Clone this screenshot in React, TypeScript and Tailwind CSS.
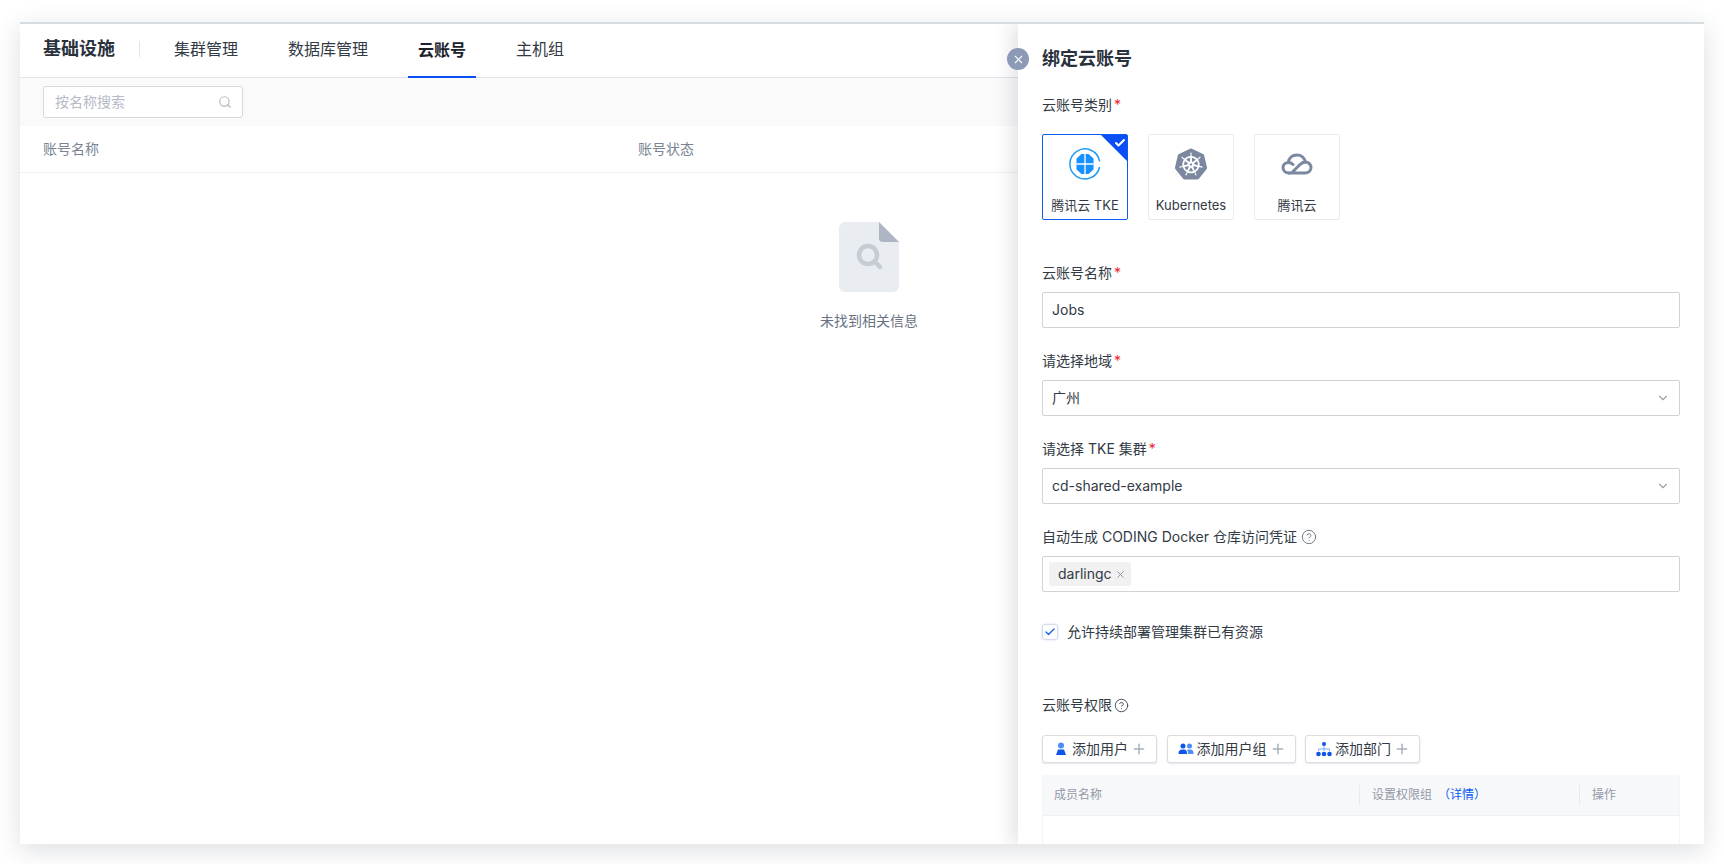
import React from "react";
import { SiKubernetes } from "react-icons/si";
import { ChevronDown, Search, X, Plus, Check, HelpCircle } from "lucide-react";

const font = { fontFamily: 'Inter, "Noto Sans CJK SC", sans-serif' };

function Label({ children, required }: { children: React.ReactNode; required?: boolean }) {
  return (
    <div className="flex items-center h-5 text-sm text-[#323a45]">
      <span>{children}</span>
      {required && <span className="text-[#f5222d] ml-[2px]">*</span>}
    </div>
  );
}

function TkeIcon() {
  return (
    <svg width="32" height="32" viewBox="0 0 32 32">
      <path d="M30.700 13.500 A15 15 0 1 0 30.600 19" fill="none" stroke="#1e9bf5" strokeWidth="1.500" />
      <path d="M12.500 6 H19.500 L24.500 10.500 V21.500 L19.500 26 H12.500 L7.500 21.500 V10.500 Z" fill="#1890ff" />
      <path d="M16 6 V26 M7.500 16 H24.500" stroke="#ffffff" strokeWidth="1.300" />
    </svg>
  );
}

function CloudIcon() {
  return (
    <svg width="32" height="22" viewBox="0 0 32 22" fill="none" stroke="#7b88a0" strokeWidth="3" strokeLinecap="round">
      <path d="M8 20 H24 C27.500 20 30 17.500 30 14.500 C30 11.500 27.500 9 24.500 9 C21 9 19.500 11 18 12.500 L11 19.500" />
      <path d="M8 20 C4.500 20 2 17.500 2 14.500 C2 11.500 4.500 9.500 7.500 9.500 C9 9.500 10.500 10 12 11.500" />
      <path d="M7.300 9.500 C7.800 5 11 2 16 2 C20 2 23.500 5 24.500 9" />
    </svg>
  );
}

function TypeCard({ icon, label, active }: { icon: React.ReactNode; label: string; active?: boolean }) {
  return (
    <div className={`relative w-[86px] h-[86px] rounded-[2px] border flex flex-col items-center ${active ? "border-[#0a5cf5]" : "border-[#e9ebef]"}`}>
      {active && (
        <div className="absolute top-0 right-0 w-[26px] h-[26px] bg-[#0a4ff5] [clip-path:polygon(0_0,100%_0,100%_100%)]">
          <Check className="absolute top-[2px] right-[1px] text-white" size={12} strokeWidth={4} />
        </div>
      )}
      <div className="h-[58px] w-full flex items-center justify-center">{icon}</div>
      <div className="mt-[2px] text-[13px] leading-5 text-[#323a45] whitespace-nowrap">{label}</div>
    </div>
  );
}

function Field({ children }: { children: React.ReactNode }) {
  return (
    <div className="mt-[9px] h-[36px] rounded-[2px] border border-[#cfd3d8] px-[9px] flex items-center justify-between text-sm text-[#323a45]">
      {children}
    </div>
  );
}

function AddButton({ icon, label }: { icon: React.ReactNode; label: string }) {
  return (
    <div className="h-[28px] pl-[10px] pr-[9px] bg-white border border-[#dadde3] rounded-[3px] shadow-[0_1px_2px_rgba(30,40,70,0.12)] flex items-center text-sm text-[#323a45]">
      <span className="w-[16px] h-[16px] flex items-center justify-center mr-[3px]">{icon}</span>
      <span>{label}</span>
      <Plus size={16} className="ml-[3px] text-[#a8b0bf]" strokeWidth={2.2} />
    </div>
  );
}

export default function App() {
  return (
    <div className="w-[1724px] h-[864px] bg-white pt-[22px] pl-[20px] overflow-hidden" style={font}>
      <div className="relative w-[1684px] h-[822px] bg-white border-t-2 border-[#d5dde3] overflow-hidden shadow-[0_6px_24px_rgba(40,50,70,0.16)]">
        <div className="h-[54px] border-b border-[#dfe2e8] flex items-stretch pl-[23px]">
          <div className="flex items-center pb-[3px] text-lg font-semibold text-[#2a313c]">基础设施</div>
          <div className="self-center w-px h-4 bg-[#e3e5e9] ml-[24px] mb-[3px]" />
          <div className="flex gap-[30px] ml-[24px] text-base text-[#323a45]">
            <div className="flex items-center pb-[3px] px-[10px]">集群管理</div>
            <div className="flex items-center pb-[3px] px-[10px]">数据库管理</div>
            <div className="flex items-center pb-[1px] px-[10px] font-semibold text-[#1c222b] border-b-2 border-[#0a4ff5] -mb-px">云账号</div>
            <div className="flex items-center pb-[3px] px-[10px]">主机组</div>
          </div>
        </div>
        <div className="h-[48px] bg-[#fafafb] pl-[23px] pt-[8px]">
          <div className="w-[200px] h-[32px] bg-white border border-[#d5d8df] rounded-[3px] pl-[11px] pr-[10px] flex items-center justify-between text-sm text-[#b5bac4]">
            <span>按名称搜索</span>
            <Search size={14} className="text-[#b5bac4]" />
          </div>
        </div>
        <div className="h-[47px] border-b border-[#f0f1f4] pl-[23px] flex items-center text-sm text-[#7b8494]">
          <div className="w-[595px]">账号名称</div>
          <div>账号状态</div>
        </div>
        <div className="w-full pl-[14px] flex flex-col items-center pt-[49px]">
          <svg width="60" height="70" viewBox="0 0 60 70">
            <path d="M6 0 H40 L60 20 V64 A6 6 0 0 1 54 70 H6 A6 6 0 0 1 0 64 V6 A6 6 0 0 1 6 0 Z" fill="#e9ecf0" />
            <path d="M40 0 L60 20 H44 A4 4 0 0 1 40 16 Z" fill="#aeb6c4" />
            <circle cx="29" cy="33" r="9" fill="none" stroke="#c6cbd4" strokeWidth="4.500" />
            <path d="M36 40 L41 45" stroke="#c6cbd4" strokeWidth="4.500" strokeLinecap="round" />
          </svg>
          <div className="mt-[19px] text-sm leading-5 text-[#697283]">未找到相关信息</div>
        </div>

        <div className="absolute top-0 left-[998px] w-[686px] h-full bg-white shadow-[-8px_0_16px_rgba(40,50,70,0.12)] pl-[24px] pr-[24px]">
          <div className="absolute left-[-11px] top-[24px] w-[22px] h-[22px] rounded-full bg-[#8c9ab6] flex items-center justify-center">
            <X size={13} className="text-white" strokeWidth={2} />
          </div>
          <div className="h-[26px] mt-[22px] flex items-center text-lg font-semibold text-[#2a313c]">绑定云账号</div>
          <div className="mt-[23px]"><Label required>云账号类别</Label></div>
          <div className="flex gap-5 mt-[19px]">
            <TypeCard active icon={<TkeIcon />} label="腾讯云 TKE" />
            <TypeCard icon={<SiKubernetes size={32} className="text-[#7b88a0]" />} label="Kubernetes" />
            <TypeCard icon={<CloudIcon />} label="腾讯云" />
          </div>
          <div className="mt-[43px]"><Label required>云账号名称</Label></div>
          <Field><span>Jobs</span></Field>
          <div className="mt-[23px]"><Label required>请选择地域</Label></div>
          <Field><span>广州</span><ChevronDown size={14} className="text-[#9aa2b1]" /></Field>
          <div className="mt-[23px]"><Label required>请选择 TKE 集群</Label></div>
          <Field><span>cd-shared-example</span><ChevronDown size={14} className="text-[#9aa2b1]" /></Field>
          <div className="mt-[23px]">
            <Label>
              <span className="flex items-center">自动生成 CODING Docker 仓库访问凭证<HelpCircle size={16} className="ml-[4px] text-[#6b7280]" strokeWidth={1.4} /></span>
            </Label>
          </div>
          <div className="mt-[9px] h-[36px] rounded-[2px] border border-[#cfd3d8] px-[6px] flex items-center">
            <div className="h-[24px] pl-[9px] pr-[5px] bg-[#f1f1f2] rounded-[2px] flex items-center text-sm text-[#323a45]">
              darlingc<X size={11} className="ml-[3px] text-[#8a8f99]" />
            </div>
          </div>
          <div className="mt-[30px] h-5 flex items-center text-sm text-[#323a45]">
            <span className="w-4 h-4 rounded-[3px] border border-[#d5dbe8] flex items-center justify-center mr-[9px] shadow-[0_0_2px_rgba(10,80,245,0.25)]">
              <Check size={12} strokeWidth={2.5} className="text-[#0a5cf5]" />
            </span>
            允许持续部署管理集群已有资源
          </div>
          <div className="mt-[53px] h-5 flex items-center text-sm text-[#323a45]">
            云账号权限<HelpCircle size={15} className="ml-[2px] text-[#3f4654]" strokeWidth={1.5} />
          </div>
          <div className="flex gap-[9.5px] mt-[20px]">
            <AddButton label="添加用户" icon={
              <svg width="14" height="14" viewBox="0 0 14 14"><circle cx="7" cy="3.500" r="3" fill="#4d8df7" /><path d="M2 13 L4 7.500 H10 L12 13 Z" fill="#0f55e8" /></svg>
            } />
            <AddButton label="添加用户组" icon={
              <svg width="16" height="14" viewBox="0 0 16 14"><circle cx="5" cy="4" r="2.500" fill="#0f55e8" /><circle cx="11.500" cy="4" r="2.500" fill="#4d8df7" /><path d="M0.500 12 C0.500 8.500 2 7.500 5 7.500 C8 7.500 9 8.500 9 12 Z" fill="#0f55e8" /><path d="M10 12 C10 10 9.800 9 9 8 C10 7.400 11 7.500 12 7.500 C14.500 7.500 15.500 8.500 15.500 12 Z" fill="#4d8df7" /></svg>
            } />
            <AddButton label="添加部门" icon={
              <svg width="16" height="15" viewBox="0 0 16 15"><circle cx="8" cy="2" r="2" fill="#0f55e8" /><path d="M8 4 V7 M2.500 9 V7 H13.500 V9 M8 7 V9" stroke="#7ea9f8" strokeWidth="1" fill="none" /><circle cx="2.500" cy="12" r="2.300" fill="#0f55e8" /><circle cx="8" cy="12" r="2.300" fill="#0f55e8" /><circle cx="13.500" cy="12" r="2.300" fill="#0f55e8" /></svg>
            } />
          </div>
          <div className="mt-[12px] rounded-t-[3px] border-x border-[#f3f4f7] h-[100px]">
            <div className="h-[41px] rounded-t-[3px] bg-[#f7f8fa] border-b border-[#f0f1f4] flex items-center text-xs text-[#9299a6]">
              <div className="w-[316px] pl-[11px]">成员名称</div>
              <div className="w-[220px] pl-[12px] border-l border-[#e8eaee] h-[20px] flex items-center">
                设置权限组<span className="ml-[6px] text-[#0a5cf5]">（详情）</span>
              </div>
              <div className="pl-[12px] border-l border-[#e8eaee] h-[20px] flex items-center">操作</div>
            </div>
          </div>
        </div>
      </div>
    </div>
  );
}
